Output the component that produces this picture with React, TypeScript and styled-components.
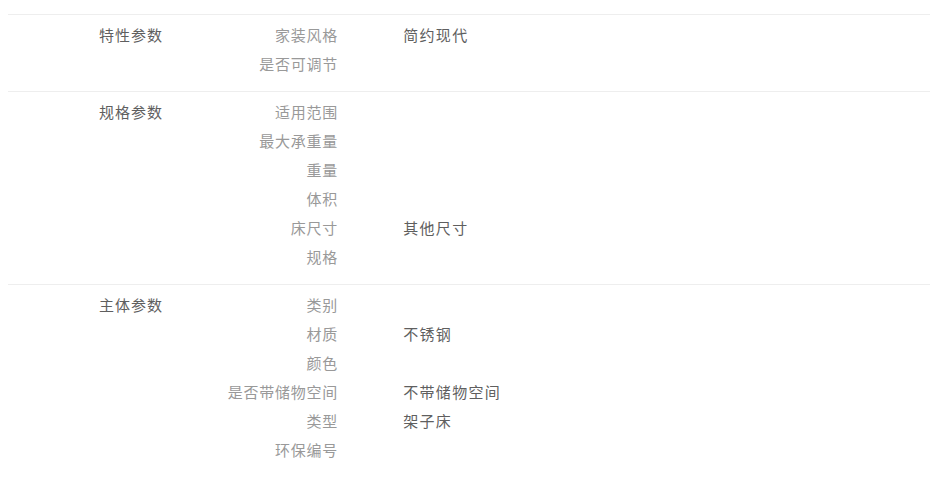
import styled, { createGlobalStyle } from 'styled-components';

const GlobalStyle = createGlobalStyle`
  body {
    margin: 0;
    background: #fff;
    font-family: "Noto Sans CJK SC", "Liberation Sans", sans-serif;
  }
`;

const Container = styled.div`
  width: 922px;
  margin-left: 8px;
  padding-top: 14px;
`;

const Group = styled.div`
  display: flex;
  border-top: solid 1px #eee;
  padding: 5px 0 13px;
  font-size: 15px;
  line-height: 29px;
  letter-spacing: 0.75px;
`;

const GroupTitle = styled.div`
  width: 200px;
  box-sizing: border-box;
  padding-left: 91px;
  color: #5f5f5f;
  letter-spacing: 1px;
`;

const Rows = styled.div`
  display: flex;
  flex-direction: column;
`;

const Row = styled.div`
  display: flex;
  height: 29px;
`;

const Label = styled.div`
  width: 130px;
  text-align: right;
  color: #999;
  margin-right: -0.75px;
`;

const Value = styled.div`
  padding-left: 66px;
  color: #5f5f5f;
  letter-spacing: 1.3px;
`;

const groups = [
  {
    title: '特性参数',
    rows: [
      ['家装风格', '简约现代'],
      ['是否可调节', ''],
    ],
  },
  {
    title: '规格参数',
    rows: [
      ['适用范围', ''],
      ['最大承重量', ''],
      ['重量', ''],
      ['体积', ''],
      ['床尺寸', '其他尺寸'],
      ['规格', ''],
    ],
  },
  {
    title: '主体参数',
    rows: [
      ['类别', ''],
      ['材质', '不锈钢'],
      ['颜色', ''],
      ['是否带储物空间', '不带储物空间'],
      ['类型', '架子床'],
      ['环保编号', ''],
    ],
  },
];

const App = () => {
  return (
    <>
      <GlobalStyle />
      <Container>
        {groups.map((g) => (
          <Group key={g.title}>
            <GroupTitle>{g.title}</GroupTitle>
            <Rows>
              {g.rows.map(([label, value]) => (
                <Row key={label}>
                  <Label>{label}</Label>
                  <Value>{value}</Value>
                </Row>
              ))}
            </Rows>
          </Group>
        ))}
      </Container>
    </>
  );
};

export default App;
